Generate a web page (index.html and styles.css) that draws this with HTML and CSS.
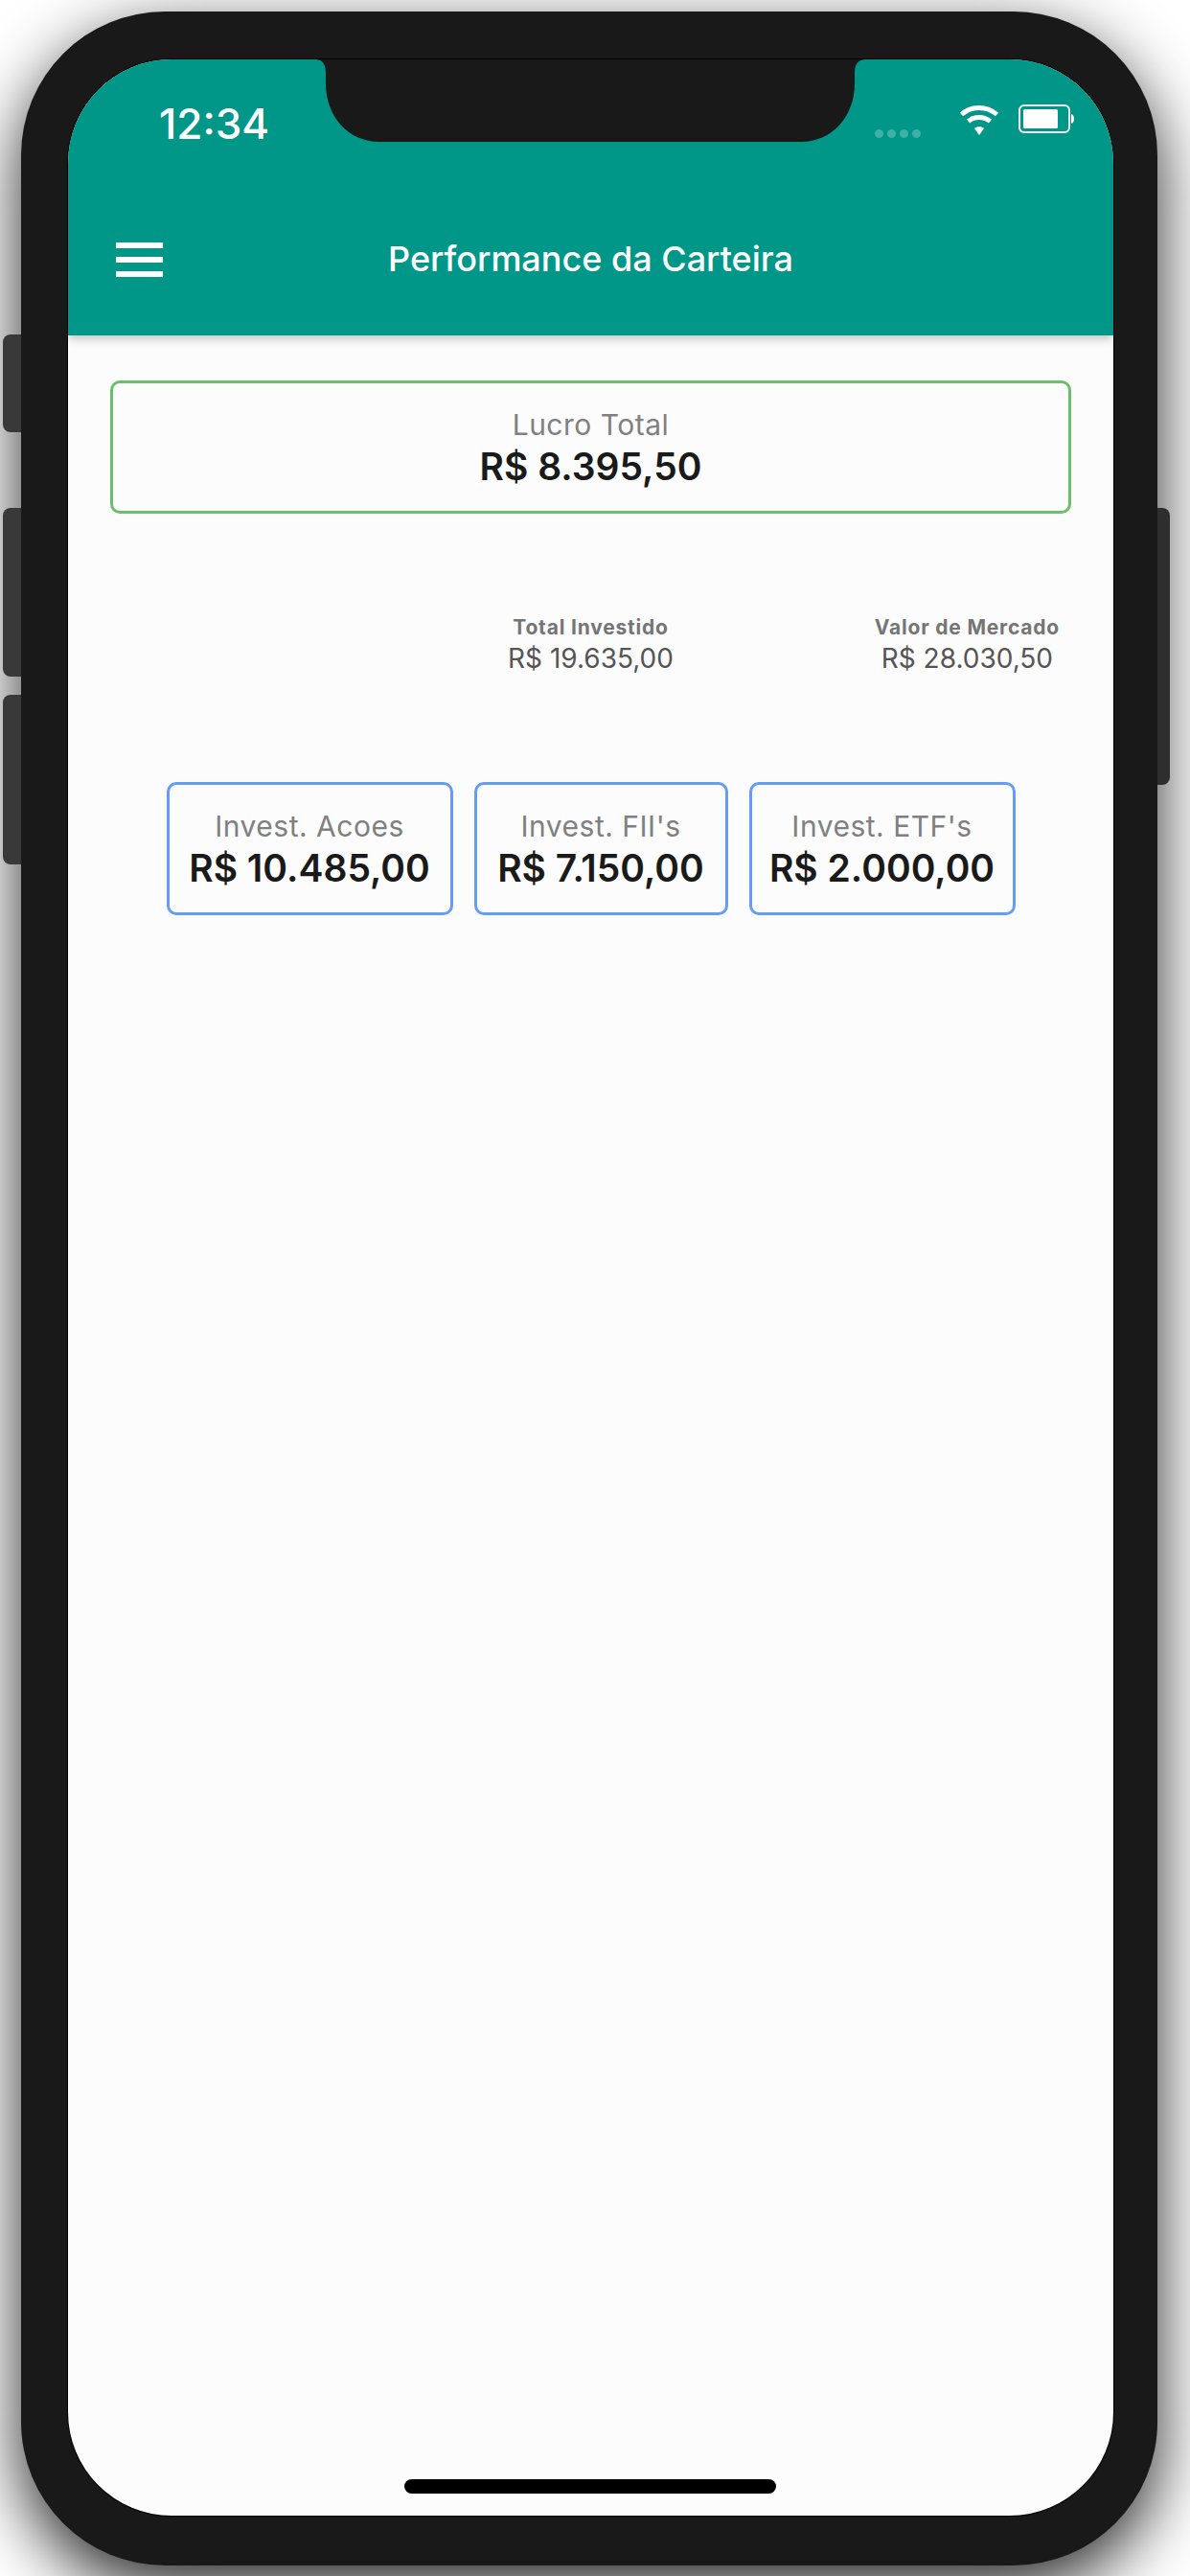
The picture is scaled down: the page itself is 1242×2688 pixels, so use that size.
FILE: index.html
```html
<!DOCTYPE html>
<html lang="pt-BR">
<head>
    <meta charset="UTF-8">
    <meta name="viewport" content="width=device-width, initial-scale=1.0">
    <title>Performance da Carteira</title>
    <link rel="stylesheet" href="styles.css">
</head>
<body>
    <div class="phone">
        <span class="side-btn btn-mute"></span>
        <span class="side-btn btn-up"></span>
        <span class="side-btn btn-down"></span>
        <span class="side-btn btn-power"></span>

        <div class="screen">
            <svg class="notch" width="575" height="86" viewBox="0 0 575 86">
                <path d="M0 0C8 0 11 6 11 14V25C11 60 35 86 67 86H507C539 86 563 60 563 25V14C563 6 566 0 575 0Z" fill="#191919"/>
            </svg>

            <header class="app-header">
                <div class="status-bar">
                    <span class="time">12:34</span>
                    <div class="status-icons">
                        <div class="signal-dots"><i></i><i></i><i></i><i></i></div>
                        <svg class="wifi" width="42" height="36" viewBox="0 0 42 36" fill="none" stroke="#fff" stroke-width="5">
                            <path d="M2.5 11.5C13 2 29 2 39.500 11.500"/>
                            <path d="M9.500 18.500C16 13 26 13 32.500 18.500"/>
                            <path d="M16 26C18.500 23.500 23.500 23.500 26 26L21 33Z" fill="#fff" stroke="none"/>
                        </svg>
                        <svg class="battery" width="58" height="30" viewBox="0 0 58 30">
                            <rect x="1" y="1" width="52" height="28" rx="5" fill="none" stroke="#fff" stroke-width="2"/>
                            <rect x="5" y="5" width="36" height="20" rx="1.500" fill="#fff"/>
                            <path d="M55 10C57 10.500 58 12.500 58 15C58 17.500 57 19.500 55 20Z" fill="#fff"/>
                        </svg>
                    </div>
                </div>
                <div class="toolbar">
                    <div class="menu-icon"><i></i><i></i><i></i></div>
                    <h1 class="page-title">Performance da Carteira</h1>
                </div>
            </header>

            <main class="content">
                <div class="card card-green">
                    <div class="card-label">Lucro Total</div>
                    <div class="card-value">R$ 8.395,50</div>
                </div>

                <div class="stats">
                    <div class="stat stat-middle">
                        <div class="stat-label">Total Investido</div>
                        <div class="stat-value">R$ 19.635,00</div>
                    </div>
                    <div class="stat stat-right">
                        <div class="stat-label">Valor de Mercado</div>
                        <div class="stat-value">R$ 28.030,50</div>
                    </div>
                </div>

                <div class="invest-row">
                    <div class="card card-blue">
                        <div class="card-label">Invest. Acoes</div>
                        <div class="card-value">R$ 10.485,00</div>
                    </div>
                    <div class="card card-blue">
                        <div class="card-label">Invest. FII's</div>
                        <div class="card-value">R$ 7.150,00</div>
                    </div>
                    <div class="card card-blue">
                        <div class="card-label">Invest. ETF's</div>
                        <div class="card-value">R$ 2.000,00</div>
                    </div>
                </div>
            </main>

            <div class="home-bar"></div>
        </div>
    </div>
</body>
</html>
```

FILE: styles.css
```css
html, body {
    height: 2688px;
    margin: 0;
    overflow: hidden;
}

body {
    background-color: #fff;
    font-family: Inter, "Noto Sans", sans-serif;
    padding: 12px 0 0 22px;
    box-sizing: border-box;
}

.phone {
    position: relative;
    width: 1186px;
    height: 2665px;
    box-sizing: border-box;
    padding: 50px 46px 52px 49px;
    background-color: #191919;
    border-radius: 150px;
    box-shadow: 0 24px 70px rgba(0, 0, 0, 0.85);
}

.side-btn {
    position: absolute;
    background-color: #393939;
    border-radius: 8px 0 0 8px;
    left: -19px;
    width: 19px;
}

.btn-mute { top: 337px; height: 102px; }
.btn-up { top: 518px; height: 176px; }
.btn-down { top: 713px; height: 177px; }

.btn-power {
    left: auto;
    right: -13px;
    top: 518px;
    width: 13px;
    height: 289px;
    background-color: #2e2e2e;
    border-radius: 0 8px 8px 0;
}

.screen {
    position: relative;
    height: 100%;
    display: flex;
    flex-direction: column;
    background-color: #fcfcfc;
    border-radius: 108px;
    box-shadow: 0 0 0 1px #000;
    overflow: hidden;
}

.notch {
    position: absolute;
    z-index: 2;
    top: 0;
    left: 258px;
}

.app-header {
    height: 288px;
    flex-shrink: 0;
    background-color: #009688;
    box-shadow: 0 3px 10px rgba(0, 0, 0, 0.25);
    color: #fff;
    position: relative;
}

.status-bar {
    height: 104px;
    display: flex;
    justify-content: space-between;
    padding: 0 41px 0 95px;
}

.time {
    font-size: 44px;
    font-weight: 500;
    line-height: 44px;
    padding-top: 45px;
}

.status-icons {
    display: flex;
    align-items: flex-start;
    padding-top: 46px;
}

.signal-dots {
    display: flex;
    gap: 4px;
    margin: 27px 40px 0 1px;
}

.signal-dots i {
    width: 9px;
    height: 9px;
    border-radius: 50%;
    background-color: rgba(255, 255, 255, 0.25);
}

.wifi { margin-right: 20px; }
.battery { margin-top: 1px; }

.toolbar {
    height: 184px;
    display: flex;
    align-items: center;
    justify-content: center;
    position: relative;
    padding-top: 24px;
    box-sizing: border-box;
}

.menu-icon {
    position: absolute;
    left: 50px;
    top: 87px;
    width: 49px;
    display: flex;
    flex-direction: column;
    gap: 9px;
}

.menu-icon i {
    height: 6px;
    background-color: #fff;
}

.page-title {
    margin: 0;
    font-size: 36px;
    font-weight: 500;
    line-height: 44px;
}

.content {
    flex: 1;
    padding: 47px 44px 0 44px;
}

.card {
    box-sizing: border-box;
    height: 139px;
    border: 3px solid #6abf69;
    border-radius: 10px;
    padding: 21px 0;
    text-align: center;
    white-space: nowrap;
}

.card-blue {
    border-color: #659cf5;
}

.card-label {
    color: #808080;
    font-size: 30px;
    line-height: 44px;
    letter-spacing: 0.5px;
}

.card-value {
    color: #1a1a1a;
    font-size: 39px;
    font-weight: 600;
    line-height: 44px;
}

.stats {
    display: grid;
    grid-template-columns: 1fr auto 1fr;
    margin-top: 104px;
}

.stat {
    text-align: center;
}

.stat-middle {
    grid-column: 2;
}

.stat-right {
    justify-self: end;
    margin-right: 12px;
}

.stat-label {
    color: #757575;
    font-size: 21px;
    font-weight: 700;
    line-height: 30px;
    letter-spacing: 0.8px;
}

.stat-value {
    color: #555;
    font-size: 28px;
    line-height: 34px;
}

.invest-row {
    display: grid;
    grid-template-columns: 299px 265px 278px;
    justify-content: center;
    gap: 22px;
    margin-top: 112px;
}

.home-bar {
    position: absolute;
    bottom: 23px;
    left: 351px;
    width: 388px;
    height: 15px;
    border-radius: 8px;
    background-color: #000;
}
```
